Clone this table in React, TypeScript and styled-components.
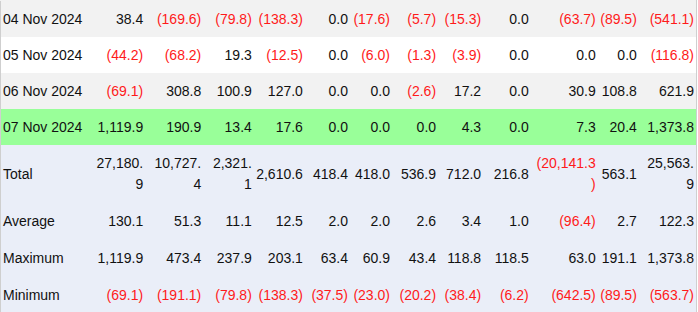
import React from "react";
import styled, { createGlobalStyle } from "styled-components";

const GlobalStyle = createGlobalStyle`
  html, body {
    margin: 0;
    padding: 0;
    background: #ffffff;
  }
  body {
    font-family: "Liberation Sans", Arial, sans-serif;
    font-size: 14px;
    color: #111111;
  }
`;

const Table = styled.table`
  width: 697px;
  table-layout: fixed;
  border-collapse: collapse;
  border-left: 1px solid #cfcfcf;
  border-right: 1px solid #cfcfcf;
  border-top: 1px solid #f2f2f2;
  font-family: "Liberation Sans", Arial, sans-serif;
  font-size: 14px;
`;

type Tone = "odd" | "even" | "highlight" | "summary";

const rowBg: Record<Tone, string> = {
  odd: "#f2f2f2",
  even: "#ffffff",
  highlight: "#99ff99",
  summary: "#eaeef8",
};

const Row = styled.tr<{ $tone: Tone }>`
  background: ${(p) => rowBg[p.$tone]};
`;

const Cell = styled.td<{ $label?: boolean; $neg?: boolean; $summary?: boolean }>`
  padding: 8px 2px;
  line-height: ${(p) => (p.$summary ? "21px" : "20px")};
  text-align: ${(p) => (p.$label ? "left" : "right")};
  vertical-align: middle;
  color: ${(p) => (p.$neg ? "#ff1a1a" : "#111111")};
  overflow-wrap: anywhere;
  white-space: normal;
`;

const widths = [93.5, 51, 58, 50.5, 51, 45, 42, 46, 45, 47.5, 67, 41, 57.5];

const body: { date: string; tone: Tone; values: string[] }[] = [
  {
    date: "04 Nov 2024",
    tone: "odd",
    values: ["38.4", "(169.6)", "(79.8)", "(138.3)", "0.0", "(17.6)", "(5.7)", "(15.3)", "0.0", "(63.7)", "(89.5)", "(541.1)"],
  },
  {
    date: "05 Nov 2024",
    tone: "even",
    values: ["(44.2)", "(68.2)", "19.3", "(12.5)", "0.0", "(6.0)", "(1.3)", "(3.9)", "0.0", "0.0", "0.0", "(116.8)"],
  },
  {
    date: "06 Nov 2024",
    tone: "odd",
    values: ["(69.1)", "308.8", "100.9", "127.0", "0.0", "0.0", "(2.6)", "17.2", "0.0", "30.9", "108.8", "621.9"],
  },
  {
    date: "07 Nov 2024",
    tone: "highlight",
    values: ["1,119.9", "190.9", "13.4", "17.6", "0.0", "0.0", "0.0", "4.3", "0.0", "7.3", "20.4", "1,373.8"],
  },
];

const summary: { label: string; values: string[] }[] = [
  {
    label: "Total",
    values: ["27,180.9", "10,727.4", "2,321.1", "2,610.6", "418.4", "418.0", "536.9", "712.0", "216.8", "(20,141.3)", "563.1", "25,563.9"],
  },
  {
    label: "Average",
    values: ["130.1", "51.3", "11.1", "12.5", "2.0", "2.0", "2.6", "3.4", "1.0", "(96.4)", "2.7", "122.3"],
  },
  {
    label: "Maximum",
    values: ["1,119.9", "473.4", "237.9", "203.1", "63.4", "60.9", "43.4", "118.8", "118.5", "63.0", "191.1", "1,373.8"],
  },
  {
    label: "Minimum",
    values: ["(69.1)", "(191.1)", "(79.8)", "(138.3)", "(37.5)", "(23.0)", "(20.2)", "(38.4)", "(6.2)", "(642.5)", "(89.5)", "(563.7)"],
  },
];

const isNeg = (v: string) => v.startsWith("(");

export default function App() {
  return (
    <>
      <GlobalStyle />
      <Table>
        <colgroup>
          {widths.map((w, i) => (
            <col key={i} style={{ width: `${w}px` }} />
          ))}
        </colgroup>
        <tbody>
          {body.map((r) => (
            <Row key={r.date} $tone={r.tone}>
              <Cell $label>{r.date}</Cell>
              {r.values.map((v, i) => (
                <Cell key={i} $neg={isNeg(v)}>
                  {v}
                </Cell>
              ))}
            </Row>
          ))}
        </tbody>
        <tfoot>
          {summary.map((r) => (
            <Row key={r.label} $tone="summary">
              <Cell $label $summary>
                {r.label}
              </Cell>
              {r.values.map((v, i) => (
                <Cell key={i} $summary $neg={isNeg(v)}>
                  {v}
                </Cell>
              ))}
            </Row>
          ))}
        </tfoot>
      </Table>
    </>
  );
}
